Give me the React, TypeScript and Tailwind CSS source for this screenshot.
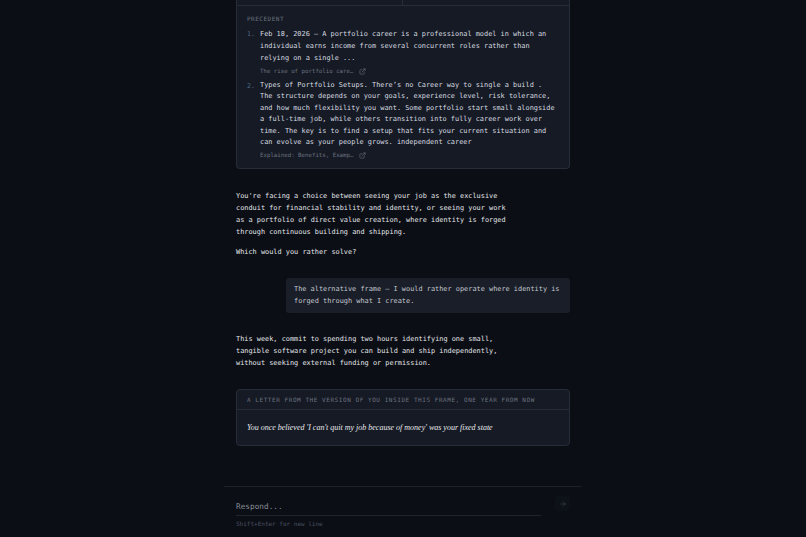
import { ExternalLink, ArrowRight } from "lucide-react";

const mono = "font-['DejaVu_Sans_Mono','Liberation_Mono',monospace]";

type Source = { n: number; text: string; link: string };

const sources: Source[] = [
  {
    n: 1,
    text: "Feb 18, 2026 — A portfolio career is a professional model in which an individual earns income from several concurrent roles rather than relying on a single ...",
    link: "The rise of portfolio care…",
  },
  {
    n: 2,
    text: "Types of Portfolio Setups. There’s no Career way to single a build . The structure depends on your goals, experience level, risk tolerance, and how much flexibility you want. Some portfolio start small alongside a full-time job, while others transition into fully career work over time. The key is to find a setup that fits your current situation and can evolve as your people grows. independent career",
    link: "Explained: Benefits, Examp…",
  },
];

function PrecedentCard() {
  return (
    <div className="rounded-b-[4px] border-x border-b border-[#262c38] bg-[#161a24]">
      {/* tail of the comparison grid above */}
      <div className="grid h-[6px] grid-cols-2 border-b border-[#262c38]">
        <div className="border-r border-[#262c38]" />
        <div />
      </div>
      <div className="pt-[8px] pr-[12px] pb-[8px] pl-[10px]">
        <div className="text-[6px] leading-[10px] tracking-[0.5px] text-[#6b7280] uppercase">Precedent</div>
        <ol className="mt-[4px] flex flex-col gap-[4px]">
          {sources.map((s) => (
            <li key={s.n} className="flex">
              <span className="w-[13px] shrink-0 text-[6.5px] leading-[12px] text-[#4f6a8c]">{s.n}.</span>
              <div className="flex-1">
                <p className={`text-[6.9px] text-[#d7dae0] ${s.n === 1 ? "leading-[12px]" : "leading-[11.4px]"}`}>{s.text}</p>
                <div className="mt-[3px] flex items-center gap-[4px] text-[5.75px] leading-[9px] text-[#6b7280]">
                  <span>{s.link}</span>
                  <ExternalLink size={7} strokeWidth={2} className="ml-[2px]" />
                </div>
              </div>
            </li>
          ))}
        </ol>
      </div>
    </div>
  );
}

export default function App() {
  return (
    <div className={`flex h-[537px] w-full flex-col overflow-hidden bg-[#0b0e15] ${mono}`}>
      <div className="mx-auto flex w-[334px] flex-1 flex-col">
        <PrecedentCard />

        <div className="mt-[21px] w-[280px] text-[6.9px] leading-[12px] text-[#e3e5e9]">
          <p>
            You're facing a choice between seeing your job as the exclusive conduit for financial stability and identity, or seeing your work as a portfolio of direct value creation, where identity is forged through continuous building and shipping.
          </p>
          <p className="mt-[8px]">Which would you rather solve?</p>
        </div>

        <div className="mt-[20px] ml-auto w-[284px] rounded-[3px] bg-[#1a1e29] px-[8px] py-[6px] text-[6.9px] leading-[11.5px] text-[#c3c7cf]">
          The alternative frame — I would rather operate where identity is forged through what I create.
        </div>

        <p className="mt-[20px] w-[280px] text-[6.9px] leading-[12px] text-[#e3e5e9]">
          This week, commit to spending two hours identifying one small, tangible software project you can build and ship independently, without seeking external funding or permission.
        </p>

        <div className="mt-[20px] rounded-[4px] border border-[#262c38] bg-[#161a24]">
          <div className="border-b border-[#262c38] px-[10px] py-[5px] text-[6px] leading-[9px] tracking-[0.56px] text-[#6b7280] uppercase">
            A letter from the version of you inside this frame, one year from now
          </div>
          <p className="px-[10px] py-[11px] font-['Liberation_Serif',serif] text-[8px] leading-[13px] text-[#e8e9ec] italic">
            You once believed 'I can't quit my job because of money' was your fixed state
          </p>
        </div>
      </div>

      <div className="mx-auto w-[358px] border-t border-[#1c212c] px-[12px] pt-[14px] pb-[9px]">
        <div className="flex items-start gap-[14px]">
          <div className="flex-1">
            <div className="border-b border-[#1f2430] pb-[3px] text-[7.75px] leading-[11px] text-[#858a94]">Respond...</div>
            <div className="mt-[3px] text-[6px] leading-[9px] text-[#4b5060]">Shift+Enter for new line</div>
          </div>
          <button className="mt-[-5px] flex h-[15px] w-[15px] items-center justify-center rounded-[3px] bg-[#0d1118] text-[#3a3f4b]">
            <ArrowRight size={8} strokeWidth={2} />
          </button>
        </div>
      </div>
    </div>
  );
}
